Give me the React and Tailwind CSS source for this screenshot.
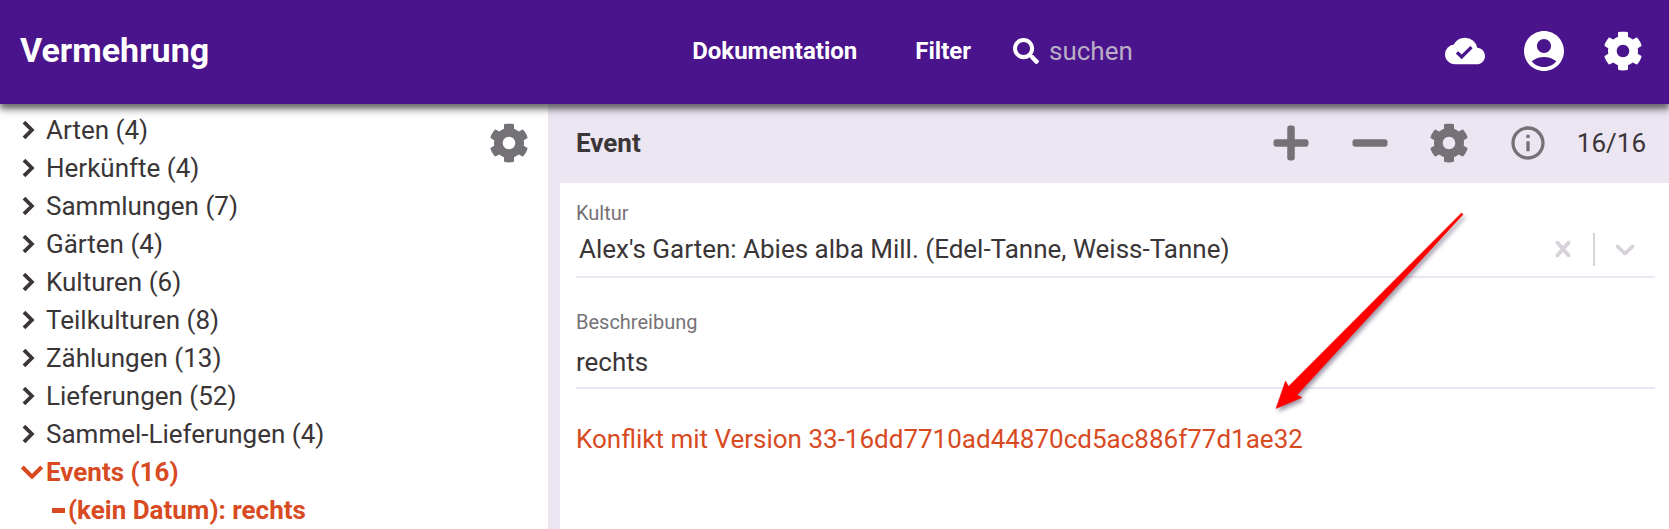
import { FaCog, FaMinus, FaPlus, FaSearch } from "react-icons/fa";
import {
  MdAccountCircle,
  MdCloudDone,
  MdInfoOutline,
} from "react-icons/md";

const folders = [
  ["Arten", 4],
  ["Herkünfte", 4],
  ["Sammlungen", 7],
  ["Gärten", 4],
  ["Kulturen", 6],
  ["Teilkulturen", 8],
  ["Zählungen", 13],
  ["Lieferungen", 52],
  ["Sammel-Lieferungen", 4],
];

function IconButton({ label, children }) {
  return (
    <button
      type="button"
      aria-label={label}
      className="flex h-14 w-[79px] shrink-0 items-center justify-center"
    >
      {children}
    </button>
  );
}

function ChevronRight() {
  return (
    <svg width="36" height="36" viewBox="0 0 24 24" aria-hidden="true">
      <path d="M9.300 6.700 14.600 12l-5.300 5.300" fill="none" stroke="currentColor" strokeWidth="2.500" />
    </svg>
  );
}

function ChevronDown() {
  return (
    <svg width="44" height="44" viewBox="0 0 24 24" className="-mr-2 shrink-0" aria-hidden="true">
      <path d="M6.700 9.300 12 14.600l5.300-5.300" fill="none" stroke="currentColor" strokeWidth="2.200" />
    </svg>
  );
}

function Header() {
  return (
    <header className="relative z-10 flex h-[104px] items-center bg-[#4a148c] pr-[7px] pb-[2px] pl-5 text-white shadow-[0_4px_5px_0_rgba(0,0,0,0.35),0_6px_8px_0_rgba(0,0,0,0.35)]">
      <h1 className="pb-[2px] text-[34px] font-bold">Vermehrung</h1>
      <div className="flex flex-1 items-center justify-end">
        <nav className="flex items-center gap-[58px] text-2xl font-bold">
          <a href="#dokumentation">Dokumentation</a>
          <a href="#filter">Filter</a>
        </nav>
        <label className="ml-[42px] flex items-center gap-[10px]">
          <FaSearch size={26} aria-hidden="true" />
          <input
            type="search"
            aria-label="suchen"
            placeholder="suchen"
            className="w-[376px] bg-transparent text-[26px] outline-none placeholder:text-[#b9aec6]"
          />
        </label>
      </div>
      <div className="flex">
        <IconButton label="Synchronisiert">
          <MdCloudDone size={40} />
        </IconButton>
        <IconButton label="Konto">
          <MdAccountCircle size={48} />
        </IconButton>
        <IconButton label="Einstellungen">
          <FaCog size={40} />
        </IconButton>
      </div>
    </header>
  );
}

function Tree() {
  return (
    <aside className="flex w-[548px] shrink-0 items-start justify-between bg-white pt-[7px]">
      <ul className="pl-[10px] leading-[38px]">
        {folders.map(([name, count]) => (
          <li key={name}>
            <button type="button" className="flex h-[38px] items-center">
              <ChevronRight />
              <span>
                {name} ({count})
              </span>
            </button>
          </li>
        ))}
        <li className="font-bold text-[#d84a1f]">
          <button type="button" className="flex h-[38px] items-center">
            <ChevronDown />
            <span>Events (16)</span>
          </button>
          <ul>
            <li>
              <button type="button" className="flex h-[38px] items-center gap-[3px] pl-[42px]">
                <span className="h-[5px] w-[13px] bg-[#d84a1f]" />
                <span>(kein Datum): rechts</span>
              </button>
            </li>
          </ul>
        </li>
      </ul>
      <div className="pt-1 text-[#757277]">
        <IconButton label="Baum-Einstellungen">
          <FaCog size={40} />
        </IconButton>
      </div>
    </aside>
  );
}

function KulturField() {
  return (
    <div>
      <label htmlFor="kultur" className="block text-[20px] leading-6 text-[#757277]">
        Kultur
      </label>
      <div className="flex h-[53px] items-center border-b-2 border-[#ece6f2] pb-[3px] text-[#d8d3db]">
        <select
          id="kultur"
          className="min-w-0 flex-1 appearance-none bg-transparent pl-[3px] text-[#3a3536] outline-none"
        >
          <option>Alex's Garten: Abies alba Mill. (Edel-Tanne, Weiss-Tanne)</option>
        </select>
        <button type="button" aria-label="Auswahl löschen" className="px-[14px]">
          <svg width="32" height="32" viewBox="0 0 20 20" fill="currentColor">
            <path d="M14.348 14.849c-0.469 0.469-1.229 0.469-1.697 0l-2.651-3.030-2.651 3.029c-0.469 0.469-1.229 0.469-1.697 0-0.469-0.469-0.469-1.229 0-1.697l2.758-3.15-2.759-3.152c-0.469-0.469-0.469-1.228 0-1.697s1.228-0.469 1.697 0l2.652 3.031 2.651-3.031c0.469-0.469 1.228-0.469 1.697 0s0.469 1.229 0 1.697l-2.758 3.152 2.758 3.15c0.469 0.469 0.469 1.229 0 1.698z" />
          </svg>
        </button>
        <span className="h-[33px] w-[2px] bg-[#d8d3db]" />
        <button type="button" aria-label="Liste öffnen" className="px-[14px]">
          <svg width="32" height="32" viewBox="0 0 20 20" fill="currentColor">
            <path d="M4.516 7.548c0.436-0.446 1.043-0.481 1.576 0l3.908 3.747 3.908-3.747c0.533-0.481 1.141-0.446 1.574 0 0.436 0.445 0.408 1.197 0 1.615-0.406 0.418-4.695 4.502-4.695 4.502-0.217 0.223-0.502 0.335-0.787 0.335s-0.57-0.112-0.789-0.335c0 0-4.287-4.084-4.695-4.502s-0.436-1.17 0-1.615z" />
          </svg>
        </button>
      </div>
    </div>
  );
}

function Arrow() {
  return (
    <svg
      aria-hidden="true"
      width="200"
      height="208"
      viewBox="0 0 200 208"
      className="pointer-events-none absolute top-[17px] right-[203px] overflow-visible drop-shadow-[2px_3px_2px_rgba(40,20,60,0.45)]"
    >
      <path
        d="M195.500 13 L197 14.500 L31 195 L36 197.500 L10 208.500 L19.500 181 L22.500 186.500 Z"
        fill="#fe0000"
        stroke="#fe0000"
        strokeWidth="0.5"
      />
    </svg>
  );
}

function EventForm() {
  return (
    <main className="flex min-w-0 flex-1 flex-col bg-[#ece6f2]">
      <div className="flex h-[79px] items-center justify-between pr-[23px] pb-px pl-7">
        <h2 className="font-bold">Event</h2>
        <div className="flex items-center text-[#757277]">
          <IconButton label="Neuer Event">
            <FaPlus size={40} />
          </IconButton>
          <IconButton label="Event löschen">
            <FaMinus size={40} />
          </IconButton>
          <IconButton label="Einstellungen">
            <FaCog size={40} />
          </IconButton>
          <IconButton label="Informationen">
            <MdInfoOutline size={40} />
          </IconButton>
          <span className="pl-[9px] text-[#3a3536]">16/16</span>
        </div>
      </div>
      <form className="relative ml-3 flex-1 bg-white pt-[18px] pr-[14px] pl-4">
        <KulturField />
        <div className="mt-8">
          <label htmlFor="beschreibung" className="block text-[20px] leading-6 text-[#757277]">
            Beschreibung
          </label>
          <input
            id="beschreibung"
            defaultValue="rechts"
            className="h-[55px] w-full border-b-2 border-[#ece6f2] bg-transparent pt-[2px] outline-none"
          />
        </div>
        <button type="button" className="mt-8 block leading-9 text-[#d84a1f]">
          Konflikt mit Version 33-16dd7710ad44870cd5ac886f77d1ae32
        </button>
        <Arrow />
      </form>
    </main>
  );
}

export default function App() {
  return (
    <div className="flex min-h-screen flex-col bg-white font-[Roboto,sans-serif] text-[26px] text-[#3a3536]">
      <Header />
      <div className="flex flex-1">
        <Tree />
        <EventForm />
      </div>
    </div>
  );
}
